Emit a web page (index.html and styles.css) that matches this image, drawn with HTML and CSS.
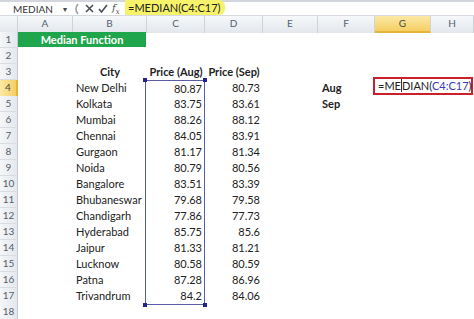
FILE: index.html
```html
<!DOCTYPE html>
<html lang="en">
<head>
    <meta charset="UTF-8">
    <title>Median Function</title>
    <link rel="stylesheet" href="styles.css">
</head>
<body>
    <div class="formula-bar">
        <div class="name-box">MEDIAN<span class="dropdown">&#9662;</span></div>
        <svg class="grip" width="6" height="12" viewBox="0 0 6 12"><path d="M5 1 Q1 6 5 11" fill="none" stroke="#9aa0a8" stroke-width="1.6"/></svg>
        <div class="tools">
            <svg width="9" height="9" viewBox="0 0 9 9"><path d="M1 1 L8 8 M8 1 L1 8" stroke="#4a4f57" stroke-width="1.6"/></svg>
            <svg width="10" height="9" viewBox="0 0 10 9"><path d="M1 5 L3.5 8 L9 1" fill="none" stroke="#4a4f57" stroke-width="1.6"/></svg>
            <span class="fx">f<sub>x</sub></span>
        </div>
        <div class="formula"><span class="mark">=MEDIAN(C4:C17)</span></div>
    </div>

    <div class="sheet">
        <div class="row header-row">
            <div class="corner"></div>
            <div class="col-head">A</div>
            <div class="col-head">B</div>
            <div class="col-head">C</div>
            <div class="col-head">D</div>
            <div class="col-head">E</div>
            <div class="col-head">F</div>
            <div class="col-head active">G</div>
            <div class="col-head">H</div>
        </div>
        <div class="row">
            <div class="row-head">1</div>
            <div class="cell title">Median Function</div>
        </div>
        <div class="row">
            <div class="row-head">2</div>
        </div>
        <div class="row">
            <div class="row-head">3</div>
            <div class="cell"></div>
            <div class="cell head">City</div>
            <div class="cell head">Price (Aug)</div>
            <div class="cell head">Price (Sep)</div>
        </div>
        <div class="row">
            <div class="row-head active">4</div>
            <div class="cell"></div>
            <div class="cell">New Delhi</div>
            <div class="cell num sel sel-top"><i class="handle tl"></i><i class="handle tr"></i>80.87</div>
            <div class="cell num">80.73</div>
            <div class="cell"></div>
            <div class="cell label">Aug</div>
            <div class="cell edit">=ME<span class="caret"></span>DIAN(<span class="ref">C4:C17</span>)</div>
        </div>
        <div class="row">
            <div class="row-head">5</div>
            <div class="cell"></div>
            <div class="cell">Kolkata</div>
            <div class="cell num sel">83.75</div>
            <div class="cell num">83.61</div>
            <div class="cell"></div>
            <div class="cell label">Sep</div>
        </div>
        <div class="row">
            <div class="row-head">6</div>
            <div class="cell"></div>
            <div class="cell">Mumbai</div>
            <div class="cell num sel">88.26</div>
            <div class="cell num">88.12</div>
        </div>
        <div class="row">
            <div class="row-head">7</div>
            <div class="cell"></div>
            <div class="cell">Chennai</div>
            <div class="cell num sel">84.05</div>
            <div class="cell num">83.91</div>
        </div>
        <div class="row">
            <div class="row-head">8</div>
            <div class="cell"></div>
            <div class="cell">Gurgaon</div>
            <div class="cell num sel">81.17</div>
            <div class="cell num">81.34</div>
        </div>
        <div class="row">
            <div class="row-head">9</div>
            <div class="cell"></div>
            <div class="cell">Noida</div>
            <div class="cell num sel">80.79</div>
            <div class="cell num">80.56</div>
        </div>
        <div class="row">
            <div class="row-head">10</div>
            <div class="cell"></div>
            <div class="cell">Bangalore</div>
            <div class="cell num sel">83.51</div>
            <div class="cell num">83.39</div>
        </div>
        <div class="row">
            <div class="row-head">11</div>
            <div class="cell"></div>
            <div class="cell">Bhubaneswar</div>
            <div class="cell num sel">79.68</div>
            <div class="cell num">79.58</div>
        </div>
        <div class="row">
            <div class="row-head">12</div>
            <div class="cell"></div>
            <div class="cell">Chandigarh</div>
            <div class="cell num sel">77.86</div>
            <div class="cell num">77.73</div>
        </div>
        <div class="row">
            <div class="row-head">13</div>
            <div class="cell"></div>
            <div class="cell">Hyderabad</div>
            <div class="cell num sel">85.75</div>
            <div class="cell num">85.6</div>
        </div>
        <div class="row">
            <div class="row-head">14</div>
            <div class="cell"></div>
            <div class="cell">Jaipur</div>
            <div class="cell num sel">81.33</div>
            <div class="cell num">81.21</div>
        </div>
        <div class="row">
            <div class="row-head">15</div>
            <div class="cell"></div>
            <div class="cell">Lucknow</div>
            <div class="cell num sel">80.58</div>
            <div class="cell num">80.59</div>
        </div>
        <div class="row">
            <div class="row-head">16</div>
            <div class="cell"></div>
            <div class="cell">Patna</div>
            <div class="cell num sel">87.28</div>
            <div class="cell num">86.96</div>
        </div>
        <div class="row">
            <div class="row-head">17</div>
            <div class="cell"></div>
            <div class="cell">Trivandrum</div>
            <div class="cell num sel sel-bottom"><i class="handle bl"></i><i class="handle br"></i>84.2</div>
            <div class="cell num">84.06</div>
        </div>
        <div class="row">
            <div class="row-head">18</div>
        </div>
    </div>
</body>
</html>
```

FILE: styles.css
```css
body {
    margin: 0;
    width: 474px;
    height: 319px;
    overflow: hidden;
    background-color: #fff;
    font-family: Lato, "Open Sans", sans-serif;
    font-size: 11px;
    color: #222;
}

/* formula bar */
.formula-bar {
    display: flex;
    align-items: center;
    height: 13px;
    border-top: 2px solid #d3d7dd;
    border-bottom: 1px solid #d6dae0;
    background-color: #fff;
}
.name-box {
    display: flex;
    align-items: center;
    width: 54px;
    padding-left: 13px;
    font-size: 10px;
    color: #333;
}
.dropdown {
    margin-left: auto;
    font-size: 8px;
    color: #444;
}
.grip {
    margin-left: 6px;
}
.tools {
    display: flex;
    align-items: center;
    gap: 4px;
    margin-left: 6px;
    width: 38px;
}
.fx {
    font-family: "DejaVu Serif", serif;
    font-style: italic;
    font-size: 10px;
    color: #4a4f57;
}
.fx sub {
    font-size: 7px;
}
.formula {
    height: 15px;
    margin-top: -2px;
    margin-left: 2px;
}
.mark {
    display: inline-block;
    height: 15px;
    line-height: 16px;
    padding: 0 5px 0 3px;
    background-color: #f6f26a;
    border-radius: 0 6px 6px 0;
    font-size: 11px;
    color: #222;
}

/* grid */
.row {
    display: grid;
    grid-template-columns: 18px 55px 74px 58px 58px 55px 57px 56px 43px;
    height: 16px;
}
.header-row {
    height: 15px;
    border-bottom: 1px solid #c7ccd4;
}
.corner,
.col-head {
    background: linear-gradient(#f6f8fa, #e3e7ec);
    border-right: 1px solid #cfd4db;
    box-sizing: border-box;
}
.col-head {
    text-align: center;
    font-size: 10px;
    line-height: 15px;
    color: #56606c;
}
.col-head.active {
    background: linear-gradient(#fbe9a6, #f5cf63);
    border-bottom: 2px solid #e5b53a;
    color: #4a4a3a;
}
.row-head {
    background: linear-gradient(90deg, #f4f6f8, #e4e8ed);
    border-right: 1px solid #c7ccd4;
    border-bottom: 1px solid #d9dde3;
    box-sizing: border-box;
    text-align: center;
    font-size: 10px;
    line-height: 15px;
    color: #56606c;
}
.row-head.active {
    background: linear-gradient(90deg, #fbe9a6, #f5cf63);
    border-right: 2px solid #e5b53a;
    color: #4a4a3a;
}

.cell {
    position: relative;
    line-height: 16px;
    white-space: nowrap;
    padding: 0 3px;
}
.title {
    grid-column: 2 / span 2;
    margin: 0 1px 1px 0;
    background-color: #1fa64c;
    color: #fff;
    font-weight: bold;
    text-align: center;
    line-height: 15px;
}
.head {
    font-weight: bold;
    text-align: center;
    display: flex;
    justify-content: center;
    overflow: visible;
}
.num {
    text-align: right;
}
.label {
    font-weight: bold;
    padding-left: 4px;
}

/* selected range C4:C17 */
.sel {
    border-left: 1px solid #5b5ca8;
    border-right: 1px solid #5b5ca8;
    margin-left: -2px;
    padding-right: 2px;
}
.sel-top {
    border-top: 1px solid #5b5ca8;
}
.sel-bottom {
    border-bottom: 1px solid #5b5ca8;
}
.handle {
    position: absolute;
    width: 4px;
    height: 4px;
    background-color: #23238f;
}
.handle.tl { left: -3px; top: -3px; }
.handle.tr { right: -3px; top: -3px; }
.handle.bl { left: -3px; bottom: -3px; }
.handle.br { right: -3px; bottom: -3px; }

/* cell being edited */
.edit {
    grid-column: 8 / span 2;
    height: 14px;
    margin: -3px 1px 0 -2px;
    border: 2px solid #c9202b;
    padding: 0 2px 0 3px;
    line-height: 14px;
    font-size: 11px;
}
.ref {
    color: #3a3ab8;
}
.caret {
    display: inline-block;
    width: 1px;
    height: 13px;
    vertical-align: -2px;
    background-color: #333;
}
```
